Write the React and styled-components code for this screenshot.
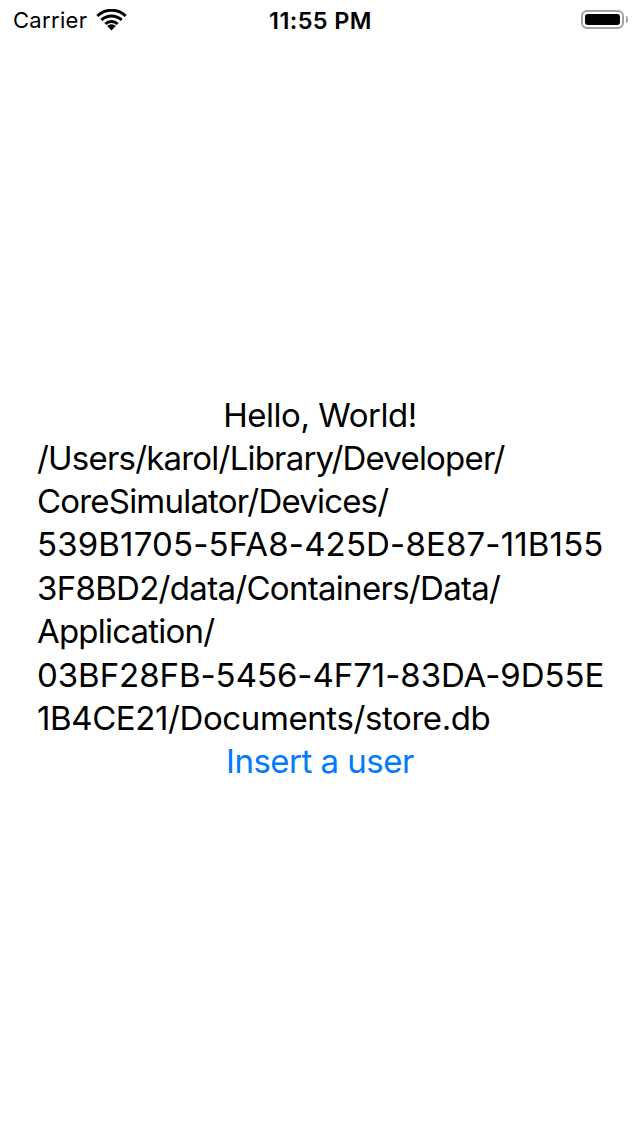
import React from 'react'
import styled, { createGlobalStyle } from 'styled-components'

const GlobalStyle = createGlobalStyle`
    html, body {
        margin: 0;
        padding: 0;
        background: #fff;
    }
    body {
        font-family: Inter, "Liberation Sans", sans-serif;
        color: #000;
    }
`;

// Inter's letters run wider than the digits, so the spacing is set per line
const pathLines = [
    { text: '/Users/karol/Library/Developer/', spacing: -0.8 },
    { text: 'CoreSimulator/Devices/', spacing: -0.8 },
    { text: '539B1705-5FA8-425D-8E87-11B155', spacing: 0.15 },
    { text: '3F8BD2/data/Containers/Data/', spacing: -0.7 },
    { text: 'Application/', spacing: -0.8 },
    { text: '03BF28FB-5456-4F71-83DA-9D55E', spacing: -0.05 },
    { text: '1B4CE21/Documents/store.db', spacing: -0.4 },
];

const WifiIcon = () => (
    <svg width="31" height="22" viewBox="0 0 31 22">
        <path d="M15.5 21.5 L11.2 17 A6.2 6.2 0 0 1 19.8 17 Z" fill="#000" />
        <path d="M8.3 14 A10.4 10.4 0 0 1 22.7 14 L20.6 16.1 A7.4 7.4 0 0 0 10.4 16.1 Z" fill="#000" />
        <path d="M4.3 10 A16 16 0 0 1 26.7 10 L24.6 12.1 A13 13 0 0 0 6.4 12.1 Z" fill="#000" />
        <path d="M0.3 6 A21.6 21.6 0 0 1 30.7 6 L28.6 8.1 A18.6 18.6 0 0 0 2.4 8.1 Z" fill="#000" />
    </svg>
);

const Battery = () => (
    <BatteryWrap>
        <BatteryBody>
            <BatteryFill />
        </BatteryBody>
        <BatteryNub />
    </BatteryWrap>
);

const App = () => {
    return (
        <Screen>
            <GlobalStyle />
            <StatusBar>
                <div className="left">
                    <span className="carrier">Carrier</span>
                    <WifiIcon />
                </div>
                <div className="time">11:55 PM</div>
                <div className="right">
                    <Battery />
                </div>
            </StatusBar>
            <Content>
                <Hello>Hello, World!</Hello>
                <PathText>
                    {pathLines.map((line, index) => (
                        <PathLine key={index} spacing={line.spacing}>{line.text}</PathLine>
                    ))}
                </PathText>
                <LinkButton>Insert a user</LinkButton>
            </Content>
        </Screen>
    )
}

const Screen = styled.div`
    width: 640px;
    height: 1136px;
    display: flex;
    flex-direction: column;
    background: #fff;
    overflow: hidden;
`;

const StatusBar = styled.div`
    height: 40px;
    flex: none;
    display: flex;
    align-items: center;
    padding: 0 12px 0 13px;
    font-size: 22px;

    .left {
        flex: 1;
        display: flex;
        align-items: center;
        gap: 9px;
    }
    .carrier {
        letter-spacing: 0.3px;
    }
    .time {
        font-weight: 600;
        font-size: 23.5px;
        letter-spacing: 0.4px;
    }
    .right {
        flex: 1;
        display: flex;
        justify-content: flex-end;
    }
`;

const BatteryWrap = styled.div`
    display: flex;
    align-items: center;
    gap: 2px;
    margin-top: -2px;
`;

const BatteryBody = styled.div`
    width: 43px;
    height: 19px;
    box-sizing: border-box;
    border: 2px solid #a3a3a3;
    border-radius: 6px;
    padding: 2px;
    display: flex;
`;

const BatteryFill = styled.div`
    flex: 1;
    background: #000;
    border-radius: 3px;
`;

const BatteryNub = styled.div`
    width: 2px;
    height: 7px;
    background: #a3a3a3;
    border-radius: 0 2px 2px 0;
`;

const Content = styled.div`
    flex: 1;
    display: flex;
    flex-direction: column;
    align-items: center;
    justify-content: center;
    font-size: 33px;
`;

const Hello = styled.div`
    line-height: 43px;
    text-align: center;
    letter-spacing: -0.45px;
`;

const PathText = styled.div`
    width: 566px;
    line-height: 43.4px;
    text-align: left;
    white-space: nowrap;
`;

const PathLine = styled.div`
    letter-spacing: ${props => props.spacing}px;
`;

const LinkButton = styled.div`
    line-height: 42px;
    color: #007aff;
    text-align: center;
    letter-spacing: -0.5px;
    cursor: pointer;
`;

export default App
